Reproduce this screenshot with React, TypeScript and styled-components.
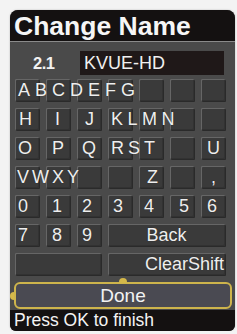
import styled, { createGlobalStyle } from "styled-components";

type Key = { col: number; span?: number };
type Label = {
  text: string;
  col: number;
  span?: number;
  pad?: number;
  ls?: number;
  align?: "left" | "center" | "right";
};
type Row = { keys: Key[]; labels: Label[] };

const cols = (list: number[]): Key[] => list.map((col) => ({ col }));
const allKeys = cols([1, 2, 3, 4, 5, 6, 7]);

const ROWS: Row[] = [
  { keys: allKeys, labels: [{ text: "ABCDEFG", col: 1, span: 7, pad: 3, ls: 5 }] },
  {
    keys: allKeys,
    labels: [
      { text: "H", col: 1, pad: 4 },
      { text: "I", col: 2, pad: 9 },
      { text: "J", col: 3, pad: 8 },
      { text: "KLMN", col: 4, span: 4, pad: 3, ls: 4.5 },
    ],
  },
  {
    keys: allKeys,
    labels: [
      { text: "O", col: 1, pad: 3 },
      { text: "P", col: 2, pad: 6 },
      { text: "Q", col: 3, pad: 5 },
      { text: "RST", col: 4, span: 4, pad: 3, ls: 4 },
      { text: "U", col: 7, pad: 6 },
    ],
  },
  {
    keys: allKeys,
    labels: [
      { text: "VWXY", col: 1, span: 4, pad: 2, ls: 3 },
      { text: "Z", col: 5, pad: 8 },
      { text: ",", col: 7, pad: 10 },
    ],
  },
  {
    keys: allKeys,
    labels: ["0", "1", "2", "3", "4", "5", "6"].map((text, i) => ({
      text,
      col: i + 1,
      pad: [3, 6, 5, 5, 5, 9, 6][i],
    })),
  },
  {
    keys: [...cols([1, 2, 3]), { col: 4, span: 4 }],
    labels: [
      { text: "7", col: 1, pad: 3 },
      { text: "8", col: 2, pad: 6 },
      { text: "9", col: 3, pad: 5 },
      { text: "Back", col: 4, span: 4, align: "center" },
    ],
  },
  {
    keys: [
      { col: 1, span: 3 },
      { col: 4, span: 4 },
    ],
    labels: [{ text: "ClearShift", col: 4, span: 4, pad: 1, align: "right" }],
  },
];

const GlobalStyle = createGlobalStyle`
  html, body {
    margin: 0;
    background: #f3f3f3;
  }
  body {
    font-family: "Liberation Sans", Arial, sans-serif;
  }
`;

const Panel = styled.div`
  width: 225px;
  height: 321px;
  margin: 10px 0 0 10px;
  border-radius: 8px 8px 6px 6px;
  overflow: hidden;
  background: #4a4a4a;
  display: flex;
  flex-direction: column;
  box-shadow: 0 0 2px rgba(0, 0, 0, 0.25);
`;

const TitleBar = styled.div`
  height: 32px;
  flex: none;
  background: #141111;
  border-bottom: 1px solid #8a8a8a;
  display: flex;
  align-items: center;
  padding: 2px 0 0 4px;
  box-sizing: border-box;
  color: #f6f6f6;
  font-weight: bold;
  font-size: 26.5px;
  line-height: 1;
`;

const ChannelRow = styled.div`
  height: 37px;
  flex: none;
  display: flex;
  align-items: flex-start;
  padding-top: 9px;
  box-sizing: border-box;
`;

const ChannelNumber = styled.div`
  width: 70px;
  height: 24px;
  padding-left: 23px;
  box-sizing: border-box;
  display: flex;
  align-items: center;
  color: #f2f2f2;
  font-weight: bold;
  font-size: 16.5px;
  letter-spacing: -0.5px;
`;

const NameField = styled.div`
  width: 144px;
  height: 24px;
  background: #1f1818;
  display: flex;
  align-items: center;
  padding-left: 4px;
  box-sizing: border-box;
  color: #f0f0f0;
  font-size: 18px;
`;

const KeyGrid = styled.div`
  display: flex;
  flex-direction: column;
  gap: 7px;
  padding-left: 5px;
`;

const KeyRow = styled.div`
  display: grid;
  grid-template-columns: repeat(7, 24px);
  grid-template-rows: 22px;
  column-gap: 7px;
`;

const KeyCap = styled.div<{ $col: number; $span: number }>`
  grid-row: 1;
  grid-column: ${({ $col, $span }) => `${$col} / span ${$span}`};
  background: #3a3a3a;
  border-radius: 1px;
  box-shadow: inset 1px 1px 0 #666, inset -1px -1px 0 #323232, 1px 1px 0 #2a2a2a;
`;

const KeyLabel = styled.span<{ $col: number; $span: number; $pad: number; $ls: number; $align: string }>`
  grid-row: 1;
  grid-column: ${({ $col, $span }) => `${$col} / span ${$span}`};
  z-index: 1;
  align-self: center;
  white-space: nowrap;
  color: #eeeeee;
  font-size: 18px;
  line-height: 1;
  letter-spacing: ${({ $ls }) => $ls}px;
  text-align: ${({ $align }) => $align};
  padding: 0 ${({ $align, $pad }) => ($align === "right" ? $pad : 0)}px 0
    ${({ $align, $pad }) => ($align === "right" ? 0 : $pad)}px;
  text-shadow: 0 0 1px rgba(0, 0, 0, 0.4);
`;

const DoneButton = styled.div`
  position: relative;
  height: 27px;
  width: 218px;
  margin: 7px 0 0 4px;
  flex: none;
  box-sizing: border-box;
  border: 2px solid #cdb44c;
  border-radius: 6px;
  background: #4a4a52;
  display: flex;
  align-items: center;
  justify-content: center;
  color: #f2f2f2;
  font-size: 19px;

  &::before {
    content: "";
    position: absolute;
    top: -6px;
    left: 50%;
    width: 8px;
    height: 5px;
    margin-left: -4px;
    border-radius: 4px 4px 0 0;
    background: #d4b84a;
  }

  &::after {
    content: "";
    position: absolute;
    left: -6px;
    top: 50%;
    width: 4px;
    height: 8px;
    margin-top: -4px;
    border-radius: 4px 0 0 4px;
    background: #d4b84a;
  }
`;

const StatusBar = styled.div`
  flex: 1;
  margin-top: 1px;
  background: #141111;
  display: flex;
  align-items: center;
  padding-left: 4px;
  color: #f4f4f4;
  font-size: 17.5px;
`;

export default function App() {
  return (
    <>
      <GlobalStyle />
      <Panel>
        <TitleBar>Change Name</TitleBar>
        <ChannelRow>
          <ChannelNumber>2.1</ChannelNumber>
          <NameField>KVUE-HD</NameField>
        </ChannelRow>
        <KeyGrid>
          {ROWS.map((row, r) => (
            <KeyRow key={r}>
              {row.keys.map((k, i) => (
                <KeyCap key={`k${i}`} $col={k.col} $span={k.span ?? 1} />
              ))}
              {row.labels.map((l, i) => (
                <KeyLabel
                  key={`l${i}`}
                  $col={l.col}
                  $span={l.span ?? 1}
                  $pad={l.pad ?? 0}
                  $ls={l.ls ?? 0}
                  $align={l.align ?? "left"}
                >
                  {l.text}
                </KeyLabel>
              ))}
            </KeyRow>
          ))}
        </KeyGrid>
        <DoneButton>Done</DoneButton>
        <StatusBar>Press OK to finish</StatusBar>
      </Panel>
    </>
  );
}
